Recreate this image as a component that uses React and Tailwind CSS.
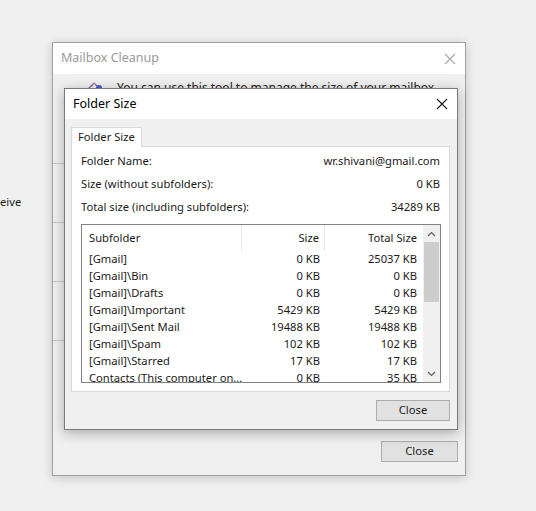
import React from 'react';

const rows = [
  { name: '[Gmail]', size: '0 KB', total: '25037 KB' },
  { name: '[Gmail]\\Bin', size: '0 KB', total: '0 KB' },
  { name: '[Gmail]\\Drafts', size: '0 KB', total: '0 KB' },
  { name: '[Gmail]\\Important', size: '5429 KB', total: '5429 KB' },
  { name: '[Gmail]\\Sent Mail', size: '19488 KB', total: '19488 KB' },
  { name: '[Gmail]\\Spam', size: '102 KB', total: '102 KB' },
  { name: '[Gmail]\\Starred', size: '17 KB', total: '17 KB' },
  { name: 'Contacts (This computer on...', size: '0 KB', total: '35 KB' },
];

const font = { fontFamily: '"Noto Sans", "Open Sans", sans-serif' };

const CloseX = ({ color }) => (
  <svg width="12" height="12" viewBox="0 0 12 12">
    <path d="M1 1 L11 11 M11 1 L1 11" stroke={color} strokeWidth="1.1" fill="none" />
  </svg>
);

const Chevron = ({ up }) => (
  <svg width="9" height="6" viewBox="0 0 9 6">
    <path d={up ? 'M1 5 L4.5 1.5 L8 5' : 'M1 1 L4.5 4.5 L8 1'} stroke="#606060" strokeWidth="1.2" fill="none" />
  </svg>
);

const InfoRow = ({ label, value }) => (
  <div className="flex justify-between h-[23px] items-center">
    <span>{label}</span>
    <span>{value}</span>
  </div>
);

export default function App() {
  return (
    <div className="relative w-[536px] h-[511px] bg-[#f0f0f0] overflow-hidden text-[11.2px] text-[#1a1a1a]" style={font}>
      <div className="absolute left-0 top-[194px]">eive</div>

      {/* Mailbox Cleanup window */}
      <div className="absolute left-[52px] top-[42px] w-[414px] h-[434px] border border-[#a0a0a0] bg-[#f0f0f0] shadow-[0_2px_10px_rgba(0,0,0,0.18)] flex flex-col">
        <div className="h-[31px] bg-white flex items-center justify-between pl-[8px] pr-[9px] shrink-0">
          <span className="text-[12.5px] text-[#9a9a9a]">Mailbox Cleanup</span>
          <CloseX color="#a8a8a8" />
        </div>
        <div className="flex gap-[14px] pl-[26px] pt-[5px]">
          <svg width="24" height="16" viewBox="0 0 24 16">
            <path d="M3 14 L14 6" stroke="#7a7a9a" strokeWidth="1" />
            <path d="M10 9 L15 4 L18 7" stroke="#8a6aa8" strokeWidth="1.2" fill="none" />
            <circle cx="20" cy="9" r="3" fill="#4a5ad0" />
          </svg>
          <span className="text-[12px] text-[#222]">You can use this tool to manage the size of your mailbox.</span>
        </div>
        <div className="flex flex-col gap-[58px] pt-[66px]">
          <div className="w-[11px] h-px bg-[#c8c8c8]" />
          <div className="w-[11px] h-px bg-[#c8c8c8]" />
          <div className="w-[11px] h-px bg-[#c8c8c8]" />
          <div className="w-[11px] h-px bg-[#c8c8c8]" />
        </div>
        <div className="mt-auto mb-[13px] mr-[7px] self-end w-[77px] h-[21px] border border-[#adadad] bg-[#e1e1e1] flex items-center justify-center">
          Close
        </div>
      </div>

      {/* Folder Size window */}
      <div className="absolute left-[64px] top-[88px] w-[394px] h-[342px] border border-[#7a7a7a] bg-[#f0f0f0] shadow-[0_3px_12px_rgba(0,0,0,0.3)] flex flex-col">
        <div className="h-[30px] bg-white flex items-center justify-between pl-[8px] pr-[9px] shrink-0">
          <span className="text-[12.5px] text-black">Folder Size</span>
          <CloseX color="#1a1a1a" />
        </div>
        <div className="flex flex-col px-[6px] pt-[8px]">
          <div className="w-[71px] h-[20px] border border-b-0 border-[#d9d9d9] bg-white flex items-center pl-[6px] relative z-10 -mb-px">
            Folder Size
          </div>
          <div className="w-[379px] h-[246px] border border-[#d9d9d9] bg-white px-[9px] pt-[3px]">
            <InfoRow label="Folder Name:" value="wr.shivani@gmail.com" />
            <InfoRow label="Size (without subfolders):" value="0 KB" />
            <InfoRow label="Total size (including subfolders):" value="34289 KB" />
            <div className="mt-[5px] w-[360px] h-[159px] border border-[#828282] flex overflow-hidden">
              <div className="flex-1 flex flex-col">
                <div className="flex h-[26px] items-center shrink-0">
                  <div className="w-[160px] pl-[7px] border-r border-[#e5e5e5] h-full flex items-center">Subfolder</div>
                  <div className="w-[83px] pr-[5px] border-r border-[#e5e5e5] h-full flex items-center justify-end">Size</div>
                  <div className="flex-1 pr-[6px] flex items-center justify-end">Total Size</div>
                </div>
                {rows.map((r) => (
                  <div key={r.name} className="flex h-[17px] items-center shrink-0">
                    <div className="w-[160px] pl-[7px] whitespace-nowrap">{r.name}</div>
                    <div className="w-[83px] pr-[5px] text-right">{r.size}</div>
                    <div className="flex-1 pr-[6px] text-right">{r.total}</div>
                  </div>
                ))}
              </div>
              <div className="w-[17px] bg-[#f0f0f0] flex flex-col items-center shrink-0">
                <div className="h-[17px] flex items-center justify-center shrink-0"><Chevron up /></div>
                <div className="w-[15px] h-[60px] bg-[#cdcdcd] shrink-0" />
                <div className="mt-auto h-[17px] flex items-center justify-center"><Chevron /></div>
              </div>
            </div>
          </div>
          <div className="self-end mt-[8px] mr-[1px] w-[74px] h-[21px] border border-[#adadad] bg-[#e1e1e1] flex items-center justify-center">
            Close
          </div>
        </div>
      </div>
    </div>
  );
}
